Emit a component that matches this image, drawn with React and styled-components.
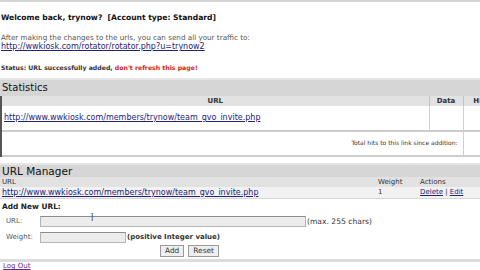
import React from 'react';
import styled, { createGlobalStyle } from 'styled-components';

const Global = createGlobalStyle`
  html, body {
    margin: 0;
    padding: 0;
    background: #fff;
  }
  body {
    font-family: "DejaVu Sans", Verdana, sans-serif;
    color: #222;
  }
`;

const Page = styled.div`
  width: 480px;
  height: 270px;
  overflow: hidden;
  border-top: 2px solid #d4d4d4;
  box-sizing: border-box;
`;

const Intro = styled.div`
  padding: 11px 1px 0;
  height: 76px;
  box-sizing: border-box;
`;

const Welcome = styled.div`
  font-size: 7.6px;
  font-weight: bold;
  line-height: 10px;
  color: #111;
`;

const Para = styled.div`
  margin-top: 10px;
  font-size: 7.2px;
  line-height: 9px;
  color: #555;
`;

const LinkLine = styled.div`
  font-size: 8px;
  line-height: 9px;
`;

const Link = styled.a`
  color: ${(p) => (p.$visited ? '#6a2a8a' : '#23237a')};
  text-decoration: underline;
  font-size: ${(p) => p.$size || '8px'};
`;

const Status = styled.div`
  margin-top: 12px;
  font-size: 6.2px;
  font-weight: bold;
  line-height: 9px;
  color: #333;
`;

const Warn = styled.span`
  color: #d42020;
`;

const SectionHead = styled.div`
  height: ${(p) => p.$h}px;
  background: #d6d6d6;
  border-top: 2px solid #e6e6e6;
  font-size: ${(p) => p.$size};
  line-height: ${(p) => p.$h}px;
  padding-left: 2px;
  color: #111;
`;

const Table = styled.table`
  border-collapse: collapse;
  width: ${(p) => p.$w}px;
  table-layout: fixed;
  font-size: 7px;
`;

const HeadCell = styled.th`
  background: #e2e2e2;
  font-weight: ${(p) => (p.$bold ? 'bold' : 'normal')};
  text-align: ${(p) => p.$align || 'left'};
  color: #333;
  height: ${(p) => p.$h || 10}px;
  padding: 0 2px;
  border-left: ${(p) => (p.$divider ? '1px solid #c4c4c4' : 'none')};
  white-space: nowrap;
  overflow: hidden;
`;

const Cell = styled.td`
  height: ${(p) => p.$h}px;
  padding: ${(p) => (p.$top ? '6px 2px 0' : '0 2px')};
  vertical-align: ${(p) => (p.$top ? 'top' : 'middle')};
  text-align: ${(p) => p.$align || 'left'};
  border-left: ${(p) => (p.$divider ? '1px solid #cfcfcf' : 'none')};
  background: ${(p) => p.$bg || '#fff'};
  white-space: nowrap;
  overflow: hidden;
  color: #333;
  line-height: 9px;
`;

const Small = styled.span`
  font-size: 6px;
  margin-right: 3px;
`;

const StatsRow = styled.tr`
  border-bottom: 2px solid #cdcdcd;
`;

const StatsBody = styled.div`
  border-left: 2px solid #555;
  width: 520px;
`;

const Gap = styled.div`
  height: 6px;
`;

const ManRow = styled.tr`
  border-bottom: 1px solid #d6d6d6;
`;

const Form = styled.div`
  padding: 0 2px;
  font-size: 7px;
  color: #444;
`;

const FormTitle = styled.div`
  font-weight: bold;
  font-size: 7.4px;
  line-height: 12px;
  margin-top: 2px;
  color: #222;
`;

const Field = styled.div`
  display: flex;
  align-items: center;
  height: ${(p) => p.$h}px;
`;

const Label = styled.span`
  width: 34px;
  padding-left: 4px;
  font-size: 7px;
  color: #555;
`;

const Input = styled.div`
  width: ${(p) => p.$w}px;
  height: 9px;
  background: #ececec;
  border: 1px solid #b4b4b4;
  border-top-color: #8c8c8c;
  position: relative;
`;

const Caret = styled.span`
  position: absolute;
  left: 50px;
  top: -3px;
  font-size: 8px;
  line-height: 10px;
  color: #444;
`;

const Note = styled.span`
  font-size: ${(p) => (p.$bold ? '7px' : '7.6px')};
  font-weight: ${(p) => (p.$bold ? 'bold' : 'normal')};
  color: #333;
  margin-left: 1px;
`;

const Buttons = styled.div`
  display: flex;
  gap: 4px;
  padding-left: 158px;
  height: 12px;
  align-items: center;
`;

const Btn = styled.button`
  font-family: inherit;
  font-size: 7.4px;
  height: 12px;
  padding: 0 4px;
  background: #efefef;
  border: 1px solid #9a9a9a;
  color: #333;
  line-height: 10px;
`;

const Rule = styled.div`
  margin-top: 2px;
  height: 3px;
  background: #dcdcdc;
`;

const Footer = styled.div`
  padding: 0 3px;
  line-height: 9px;
  font-size: 7px;
`;

export default function App() {
  return (
    <>
      <Global />
      <Page>
        <Intro>
          <Welcome>Welcome back, trynow?&nbsp; [Account type: Standard]</Welcome>
          <Para>After making the changes to the urls, you can send all your traffic to:</Para>
          <LinkLine>
            <Link href="#">http://wwkiosk.com/rotator/rotator.php?u=trynow2</Link>
          </LinkLine>
          <Status>
            Status: URL successfully added, <Warn>don't refresh this page!</Warn>
          </Status>
        </Intro>

        <SectionHead $h={16} $size="10px">Statistics</SectionHead>
        <StatsBody>
          <Table $w={497}>
            <colgroup>
              <col style={{ width: 427 }} />
              <col style={{ width: 34 }} />
              <col />
            </colgroup>
            <thead>
              <tr>
                <HeadCell $bold $align="center" $h={10}>URL</HeadCell>
                <HeadCell $bold $align="center" $divider>Data</HeadCell>
                <HeadCell $bold $align="center" $divider>Hits</HeadCell>
              </tr>
            </thead>
            <tbody>
              <StatsRow>
                <Cell $h={24}>
                  <Link href="#">http://www.wwkiosk.com/members/trynow/team_gvo_invite.php</Link>
                </Cell>
                <Cell $divider $h={24} />
                <Cell $divider $h={24} />
              </StatsRow>
              <StatsRow>
                <Cell $top $h={17} $align="right" colSpan={2}>
                  <Small>Total hits to this link since addition:</Small>
                </Cell>
                <Cell $divider $h={17} />
              </StatsRow>
            </tbody>
          </Table>
        </StatsBody>
        <Gap />

        <SectionHead $h={12} $size="10.5px">URL Manager</SectionHead>
        <Table $w={480}>
          <colgroup>
            <col style={{ width: 376 }} />
            <col style={{ width: 42 }} />
            <col />
          </colgroup>
          <thead>
            <tr>
              <HeadCell $h={10}>URL</HeadCell>
              <HeadCell>Weight</HeadCell>
              <HeadCell>Actions</HeadCell>
            </tr>
          </thead>
          <tbody>
            <ManRow>
              <Cell $h={11} $bg="#f2f2f2">
                <Link href="#">http://www.wwkiosk.com/members/trynow/team_gvo_invite.php</Link>
              </Cell>
              <Cell $h={11} $bg="#f2f2f2">1</Cell>
              <Cell $h={11} $bg="#f2f2f2">
                <Link href="#" $size="7px">Delete</Link> | <Link href="#" $size="7px">Edit</Link>
              </Cell>
            </ManRow>
          </tbody>
        </Table>

        <Form>
          <FormTitle>Add New URL:</FormTitle>
          <Field $h={16}>
            <Label>URL:</Label>
            <Input $w={264}>
              <Caret>Ī</Caret>
            </Input>
            <Note>(max. 255 chars)</Note>
          </Field>
          <Field $h={16}>
            <Label>Weight:</Label>
            <Input $w={84} />
            <Note $bold>(positive Integer value)</Note>
          </Field>
          <Buttons>
            <Btn>Add</Btn>
            <Btn>Reset</Btn>
          </Buttons>
        </Form>
        <Rule />
        <Footer>
          <Link href="#" $visited $size="7px">Log Out</Link>
        </Footer>
      </Page>
    </>
  );
}
